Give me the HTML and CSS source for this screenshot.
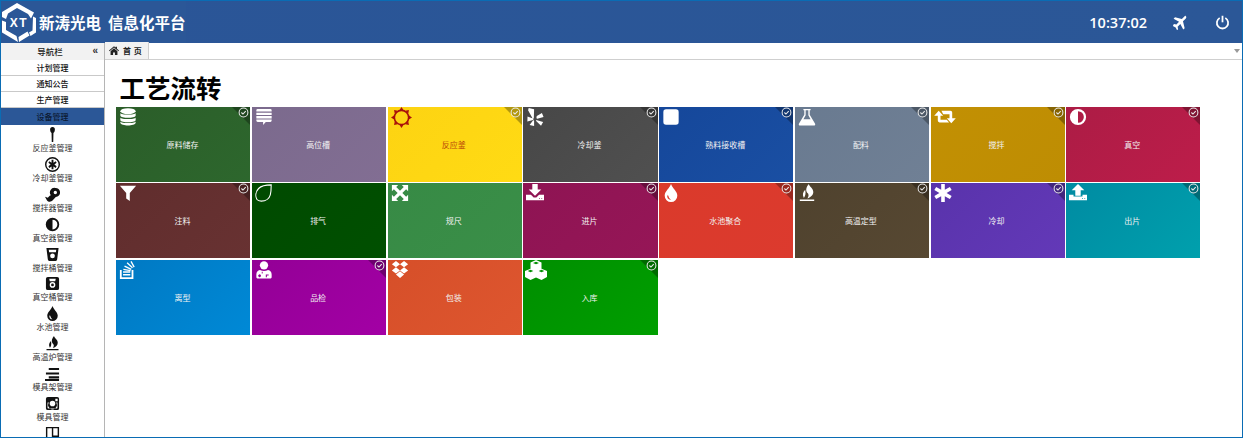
FILE: index.html
```html
<!DOCTYPE html>
<html lang="zh">
<head>
<meta charset="utf-8">
<title>新涛光电 信息化平台</title>
<link rel="stylesheet" href="styles.css">
</head>
<body>
<svg class="sprite" width="0" height="0" aria-hidden="true">
<defs>
<symbol id="i-db" viewBox="0 0 20 20"><ellipse cx="10" cy="3.500" rx="8.500" ry="3.200"/><path d="M1.500 5.500c1 2.400 16 2.400 17 0v3c-1 3-16 3-17 0zM1.500 10.500c1 2.400 16 2.400 17 0v3c-1 3-16 3-17 0zM1.500 15c1 2.400 16 2.400 17 0v1.500c-1 4-16 4-17 0z"/></symbol>
<symbol id="i-chat" viewBox="0 0 20 20"><path d="M3 1h14a1.500 1.500 0 0 1 1.500 1.500V4H1.500V2.500A1.500 1.500 0 0 1 3 1zM1.500 5.200h17v2.600h-17zM1.500 9h17v2.600h-17zM1.500 12.800h17v1.200A1.500 1.500 0 0 1 17 15.500h-5l-3 3.500v-3.500H3A1.500 1.500 0 0 1 1.500 14z"/></symbol>
<symbol id="i-sun" viewBox="0 0 20 20"><circle cx="10" cy="10" r="6.800" fill="none" stroke="currentColor" stroke-width="1.500"/><path d="M10 0l2 3H8zM10 20l2-3H8zM0 10l3 2V8zM20 10l-3 2V8zM2.900 2.900l3.500.7-2.800 2.800zM17.100 2.900l-3.500.7 2.800 2.800zM2.900 17.100l3.500-.7-2.800-2.800zM17.100 17.100l-3.500-.7 2.800-2.800z"/></symbol>
<symbol id="i-yelp" viewBox="0 0 20 20"><path d="M3 0l6 1.500-.3 9.500c-.1.800-1 1-1.500.4L2.300 2.500zM12 9l5.700-3.500 1.800 4.500-7 2c-.8.200-1.200-1.300-.5-3zM1.700 9.500l6 2.300c.8.400.7 1.300 0 1.600L1.500 15zM12.300 13.500l6.700 2-2.300 4.200-5.200-5c-.5-.6 0-1.400.8-1.200zM9 14.500v5.500l-5-1 3.700-5c.5-.6 1.300-.2 1.300.5z"/></symbol>
<symbol id="i-square" viewBox="0 0 20 20"><rect x="1.500" y="1.500" width="17" height="17" rx="3"/></symbol>
<symbol id="i-flask" viewBox="0 0 20 20"><path fill-rule="evenodd" d="M6 1h8v1.500h-1v5l6 10c.5 1-.2 2-1.200 2H2.200c-1 0-1.700-1-1.200-2l6-10v-5H6zM8.500 2.500v5.500L6 12.500h8L11.500 8V2.500z"/></symbol>
<symbol id="i-retweet" viewBox="0 0 24 20"><path d="M5 3L10 8.500H7V13h7l2.500 3H6a2 2 0 0 1-2-2V8.500H0zM8 3h10a2 2 0 0 1 2 2v6.500h4L19 17l-5-5.500h3V7h-7z"/></symbol>
<symbol id="i-half" viewBox="0 0 20 20"><path fill-rule="evenodd" d="M10 1a9 9 0 1 1 0 18 9 9 0 0 1 0-18zM10 3.500v13a6.500 6.500 0 0 0 0-13z"/></symbol>
<symbol id="i-filter" viewBox="0 0 20 20"><path d="M1 2h18l-7 8v9l-4-3v-6z"/></symbol>
<symbol id="i-leaf" viewBox="0 0 20 20"><path fill="none" stroke="currentColor" stroke-width="1.200" d="M18 1c-7 0-11 1-14 4S0 13 2 17c1 1.500 3 2 5 2 5 0 9-3 10-7s1-8 1-11z"/></symbol>
<symbol id="i-expand" viewBox="0 0 20 20"><path d="M1 1h7L5.800 3.200 10 7.400l4.200-4.200L12 1h7v7l-2.200-2.200L12.600 10l4.200 4.200L19 12v7h-7l2.200-2.200L10 12.600l-4.200 4.200L8 19H1v-7l2.200 2.200L7.400 10 3.200 5.800 1 8z"/></symbol>
<symbol id="i-down" viewBox="0 0 20 20"><path fill-rule="evenodd" d="M7 0h6v6h4l-7 7-7-7h4zM0 12h5.500l3 3h3l3-3H20v6H0zM14.500 15.500v1h1v-1zM17 15.500v1h1v-1z"/></symbol>
<symbol id="i-up" viewBox="0 0 20 20"><path fill-rule="evenodd" d="M10 0l7 7h-4v6H7V7H3zM0 12h5v2h10v-2h5v6H0zM14.500 15.500v1h1v-1zM17 15.500v1h1v-1z"/></symbol>
<symbol id="i-drop" viewBox="0 0 20 20"><path fill-rule="evenodd" d="M10 0c1.500 5 7 8 7 13a7 7 0 0 1-14 0c0-5 5.500-8 7-13zM6.500 12a3.500 3.500 0 0 0 3.500 5.500c-2-1-2.500-3-3.500-5.500z"/></symbol>
<symbol id="i-fire" viewBox="0 0 20 20"><path d="M12 0c.5 3 5 4.500 5 9 0 3-2.500 6-6.500 7 1.500-2.500 2-4.500-.5-6.500C8 6 10 2.500 12 0zM8 6.500C5.500 9 4.500 12 6.500 15.500 8 14 9 11 8 6.500zM2 17.300h16V19H2z"/></symbol>
<symbol id="i-asterisk" viewBox="0 0 20 20"><path d="M8 0h4v6.500l5.600-3.300 2 3.500L14 10l5.600 3.300-2 3.500L12 13.500V20H8v-6.500l-5.600 3.300-2-3.500L6 10 .4 6.700l2-3.500L8 6.500z"/></symbol>
<symbol id="i-stack" viewBox="0 0 20 20"><path d="M1 10h2v8h11v-8h2v10H1zM4.500 11.500h8V13h-8zM4.500 14.500h8V16h-8zM5 8.500l8 1.500-.3 1.500-8-1.500zM6.500 5l7.500 3.500-.7 1.400L5.800 6.400zM9.500 1.500L15.500 7l-1 1.100-6-5.500zM14 0l3.500 6.500-1.300.7L12.700.7z"/></symbol>
<symbol id="i-doctor" viewBox="0 0 20 20"><circle cx="10" cy="4.800" r="4.600"/><path fill-rule="evenodd" d="M5.500 10c3 1.500 6 1.500 9 0 2.500.5 4 2 4 5v3c0 1-1 1.500-2 1.500H3.500c-1 0-2-.5-2-1.500v-3c0-3 1.500-4.500 4-5zM4.500 15a1.500 1.500 0 1 0 2 2 1.500 1.500 0 0 0-2-2zM7.500 12v2h1v-2zM12 16v2h1.200v-2h2v-1h-3.200z"/></symbol>
<symbol id="i-dropbox" viewBox="0 0 20 20"><path d="M5.500 0L10 3.500 5.500 7 1 3.500zM14.500 0L19 3.500 14.500 7 10 3.500zM5.500 7L10 10.500 5.500 14 1 10.500zM14.500 7L19 10.500 14.500 14 10 10.500zM10 11.500l4.500 3.500-4.500 4-4.500-4z"/></symbol>
<symbol id="i-cubes" viewBox="0 0 22 20"><path fill-rule="evenodd" d="M11 0l5.500 2.500v6.200L22 11v6l-5.500 3L11 17.500 5.500 20 0 17v-6l5.500-2.300V2.500zM8 3l3 1.300L14 3l-3-1.300zM2.700 11l2.800 1.200L8.300 11 5.500 9.800zM13.700 11l2.800 1.200 2.800-1.200-2.800-1.200z"/></symbol>
<symbol id="i-check" viewBox="0 0 12 12"><circle cx="6" cy="6" r="4.800" fill="none" stroke="currentColor" stroke-width="1.100"/><path fill="none" stroke="currentColor" stroke-width="1.200" d="M3.700 6l1.700 1.700 3-3.300"/></symbol>
<symbol id="i-pin" viewBox="0 0 16 16"><path d="M8 0a2.500 2.500 0 0 1 2.500 3c0 2-1 3-1.500 3.500L8.800 16H7.200L7 6.500C6.500 6 5.500 5 5.500 3A2.500 2.500 0 0 1 8 0z"/></symbol>
<symbol id="i-empire" viewBox="0 0 16 16"><path fill-rule="evenodd" d="M8 0a8 8 0 1 1 0 16A8 8 0 0 1 8 0zM8 1.500a6.500 6.500 0 1 0 0 13 6.500 6.500 0 0 0 0-13zM7 3h2v3l2.400-1.600 1 1.700L10 8l2.400 1.900-1 1.700L9 10v3H7v-3l-2.400 1.600-1-1.700L6 8 3.600 6.100l1-1.700L7 6z"/></symbol>
<symbol id="i-steam" viewBox="0 0 16 16"><path fill-rule="evenodd" d="M11 1a4.800 4.800 0 1 1 .5 9.600L8 14.500c-1.500 1.500-4.500 1.800-6-.5L0 10.500l3 1C4 10 5 9 6.300 8.700A4.800 4.800 0 0 1 11 1zM11 4a1.800 1.800 0 1 0 0 3.600A1.800 1.800 0 0 0 11 4z"/></symbol>
<symbol id="i-bucket" viewBox="0 0 16 16"><path fill-rule="evenodd" d="M1.500 1h13l-1.500 12c-.2 1.500-1.500 2-2.500 2h-5c-1 0-2.300-.5-2.500-2zM4 3l.4 2.500h7.200L12 3zM8 7a2.500 2.500 0 1 0 0 5 2.500 2.500 0 0 0 0-5z"/></symbol>
<symbol id="i-vac" viewBox="0 0 16 16"><path fill-rule="evenodd" d="M3 1h10a2 2 0 0 1 2 2v10a2 2 0 0 1-2 2H3a2 2 0 0 1-2-2V3a2 2 0 0 1 2-2zM4.500 3l.6 2.500h5.800l.6-2.500zM8 6.500A3 3 0 1 0 8 12.500 3 3 0 0 0 8 6.500zM8 8a1.500 1.500 0 1 1 0 3 1.500 1.500 0 0 1 0-3z"/></symbol>
<symbol id="i-bars" viewBox="0 0 16 16"><path d="M4 2h11v2.200H4zM1 6.800h14V9H1zM4 11h11v2.200H4zM0 13.800h15V16H0z"/></symbol>
<symbol id="i-insta" viewBox="0 0 16 16"><path fill-rule="evenodd" d="M3 1h10a2 2 0 0 1 2 2v10a2 2 0 0 1-2 2H3a2 2 0 0 1-2-2V3a2 2 0 0 1 2-2zM11 3v2.500h2.500V3zM8 5a3 3 0 1 0 0 6 3 3 0 0 0 0-6zM2.700 7v5.500c0 .5.300.8.800.8h9c.5 0 .8-.3.800-.8V7h-1.500a4.600 4.600 0 1 1-7.600 0z"/></symbol>
<symbol id="i-trello" viewBox="0 0 16 16"><path fill-rule="evenodd" d="M1 1h14v15H1zM2.500 2.500V14h4.800V2.500zM8.800 2.500V10h4.700V2.500z"/></symbol>
<symbol id="i-plane" viewBox="0 0 16 16"><path d="M14.800 1.200c.8.800.5 2-.3 2.800l-2.800 2.700 1.800 7.300-1.500 1.500-3.100-5.800-2.900 2.800.5 2.700-1.100 1.100-1.500-3-3-1.500L2 9.500l2.700.5 2.800-2.900L1.700 4 3.200 2.500 10.500 4.300l2.700-2.800c.6-.7 1-.8 1.600-.3z"/></symbol>
<symbol id="i-home" viewBox="0 0 16 14"><path d="M8 0l2.500 2.200V1h2.200v3.200L16 7l-.8 1L8 2 .8 8 0 7zM8 3.500l5.500 4.500v6H9.500v-4h-3v4h-4V8z"/></symbol>
</defs>
</svg>
<div class="window">
  <header class="topbar">
    <div class="brand">
      <svg class="logo" viewBox="0 0 36 42">
        <path class="logo-hex" d="M16 2L33 11.500l-3 6-3-4.500L16 7 7 12.500 5 18 1 16V11zM32 15.500L35 17v14.500l-5.500 3.500-1.500-3.500 3.500-2zM1 19.500l4 1.500v8L15.500 35l1.500 6L1 31.500zM17.500 36l9-5.500 2 4L18 41z"/>
        <text class="logo-text" x="18" y="25.500">XT</text>
      </svg>
      <span class="brand-co">新涛光电</span>
      <span class="brand-sys">信息化平台</span>
    </div>
    <div class="top-right">
      <span class="clock">10:37:02</span>
      <svg class="top-icon plane"><use href="#i-plane"/></svg>
      <svg class="top-icon power" viewBox="0 0 16 16"><path d="M5 3.200a6 6 0 1 0 6 0" fill="none" stroke="currentColor" stroke-width="1.900"/><path d="M8 .8v7" fill="none" stroke="currentColor" stroke-width="1.900"/></svg>
    </div>
  </header>
  <div class="body">
    <aside class="side">
      <div class="side-title"><span>导航栏</span><b class="collapse">«</b></div>
      <div class="menu">计划管理</div>
      <div class="menu">通知公告</div>
      <div class="menu">生产管理</div>
      <div class="menu active">设备管理</div>
      <div class="sub"><svg><use href="#i-pin"/></svg><span>反应釜管理</span></div>
      <div class="sub"><svg><use href="#i-empire"/></svg><span>冷却釜管理</span></div>
      <div class="sub"><svg><use href="#i-steam"/></svg><span>搅拌器管理</span></div>
      <div class="sub"><svg><use href="#i-half"/></svg><span>真空器管理</span></div>
      <div class="sub"><svg><use href="#i-bucket"/></svg><span>搅拌桶管理</span></div>
      <div class="sub"><svg><use href="#i-vac"/></svg><span>真空桶管理</span></div>
      <div class="sub"><svg><use href="#i-drop"/></svg><span>水池管理</span></div>
      <div class="sub"><svg><use href="#i-fire"/></svg><span>高温炉管理</span></div>
      <div class="sub"><svg><use href="#i-bars"/></svg><span>模具架管理</span></div>
      <div class="sub"><svg><use href="#i-insta"/></svg><span>模具管理</span></div>
      <div class="sub"><svg><use href="#i-trello"/></svg></div>
    </aside>
    <main class="main">
      <div class="tabs">
        <div class="tab"><svg class="tab-home"><use href="#i-home"/></svg><span>首 页</span></div>
        <i class="tab-arrow"></i>
      </div>
      <div class="content">
        <h1 class="title">工艺流转</h1>
        <div class="tiles">
          <a class="tile c-green done"><svg class="ic"><use href="#i-db"/></svg><svg class="ck"><use href="#i-check"/></svg><span>原料储存</span></a>
          <a class="tile c-mauve"><svg class="ic"><use href="#i-chat"/></svg><span>高位槽</span></a>
          <a class="tile c-yellow done"><svg class="ic big"><use href="#i-sun"/></svg><svg class="ck"><use href="#i-check"/></svg><span>反应釜</span></a>
          <a class="tile c-gray done"><svg class="ic"><use href="#i-yelp"/></svg><svg class="ck"><use href="#i-check"/></svg><span>冷却釜</span></a>
          <a class="tile c-navy done"><svg class="ic"><use href="#i-square"/></svg><svg class="ck"><use href="#i-check"/></svg><span>熟料接收槽</span></a>
          <a class="tile c-slate done"><svg class="ic"><use href="#i-flask"/></svg><svg class="ck"><use href="#i-check"/></svg><span>配料</span></a>
          <a class="tile c-gold done"><svg class="ic wide"><use href="#i-retweet"/></svg><svg class="ck"><use href="#i-check"/></svg><span>搅拌</span></a>
          <a class="tile c-crimson done"><svg class="ic"><use href="#i-half"/></svg><svg class="ck"><use href="#i-check"/></svg><span>真空</span></a>
          <a class="tile c-brown done"><svg class="ic"><use href="#i-filter"/></svg><svg class="ck"><use href="#i-check"/></svg><span>注料</span></a>
          <a class="tile c-forest"><svg class="ic"><use href="#i-leaf"/></svg><span>排气</span></a>
          <a class="tile c-emerald"><svg class="ic"><use href="#i-expand"/></svg><span>规尺</span></a>
          <a class="tile c-magenta done"><svg class="ic"><use href="#i-down"/></svg><svg class="ck"><use href="#i-check"/></svg><span>进片</span></a>
          <a class="tile c-red done"><svg class="ic"><use href="#i-drop"/></svg><svg class="ck"><use href="#i-check"/></svg><span>水池聚合</span></a>
          <a class="tile c-umber done"><svg class="ic"><use href="#i-fire"/></svg><svg class="ck"><use href="#i-check"/></svg><span>高温定型</span></a>
          <a class="tile c-purple done"><svg class="ic"><use href="#i-asterisk"/></svg><svg class="ck"><use href="#i-check"/></svg><span>冷却</span></a>
          <a class="tile c-teal done"><svg class="ic"><use href="#i-up"/></svg><svg class="ck"><use href="#i-check"/></svg><span>出片</span></a>
          <a class="tile c-blue"><svg class="ic"><use href="#i-stack"/></svg><span>离型</span></a>
          <a class="tile c-violet done"><svg class="ic"><use href="#i-doctor"/></svg><svg class="ck"><use href="#i-check"/></svg><span>品检</span></a>
          <a class="tile c-orange"><svg class="ic"><use href="#i-dropbox"/></svg><span>包装</span></a>
          <a class="tile c-lime done"><svg class="ic cubes"><use href="#i-cubes"/></svg><svg class="ck"><use href="#i-check"/></svg><span>入库</span></a>
        </div>
      </div>
    </main>
  </div>
</div>
</body>
</html>
```
FILE: styles.css
```css
* { box-sizing: border-box; }
html, body { margin: 0; height: 100%; overflow: hidden; }
body { font-family: "Noto Sans CJK SC", "Noto Sans", sans-serif; font-size: 8px; color: #222; background: #fff; }
.sprite { position: absolute; }
.window { height: 438px; display: flex; flex-direction: column; border: 1px solid #0a6cb4; }
.topbar { height: 42px; flex: none; display: flex; justify-content: space-between; align-items: center; background: linear-gradient(90deg, #2a5597 0, #2b5797 100%); color: #fff; }
.brand { display: flex; align-items: center; height: 100%; background: #2b5797; }
.logo { width: 36px; height: 42px; flex: none; fill: #fff; }
.logo-text { font-family: "Liberation Sans", sans-serif; font-size: 12px; font-weight: 700; letter-spacing: 1.500px; text-anchor: middle; fill: #fff; }
.brand-co { margin-left: 2px; font-size: 15.500px; font-weight: 700; }
.brand-sys { margin-left: 7px; font-size: 15.500px; font-weight: 700; }
.top-right { display: flex; align-items: center; height: 100%; }
.clock { font-family: "Open Sans", sans-serif; font-size: 14.500px; font-weight: 600; margin-right: 25px; }
.top-icon { width: 15px; height: 15px; fill: #fff; color: #fff; }
.plane { margin-right: 28px; }
.power { margin-right: 12px; }
.body { flex: 1; min-height: 0; display: flex; }
.side { width: 104px; flex: none; overflow: hidden; border-right: 1px solid #b5b5b5; background: #fff; }
.side-title { height: 17px; display: flex; justify-content: center; align-items: center; position: relative; background: #f2f2f2; font-weight: 500; padding-right: 5px; padding-bottom: 2px; font-size: 8.500px; }
.collapse { position: absolute; right: 6px; top: 1px; font: 700 10px/14px "Liberation Sans", sans-serif; color: #333; }
.menu { height: 16px; line-height: 16px; text-align: center; font-weight: 500; border-bottom: 1px solid #c9c9c9; color: #111; }
.menu.active { background: #2b5797; border-bottom-color: #2b5797; color: #0c1a33; height: 17px; line-height: 17px; }
.sub { height: 29.900px; display: flex; flex-direction: column; align-items: center; justify-content: flex-start; padding-top: 2px; color: #333; }
.sub svg { width: 15px; height: 15px; fill: #111; color: #111; flex: none; }
.sub span { line-height: 12px; }
.main { flex: 1; min-width: 0; display: flex; flex-direction: column; }
.tabs { height: 17px; flex: none; display: flex; align-items: flex-end; position: relative; border-bottom: 1px solid #cfcfcf; background: #fff; }
.tab { width: 44px; height: 17px; display: flex; align-items: center; padding-left: 4px; gap: 4px; background: #f2f2f2; border-right: 1px solid #cfcfcf; font-weight: 700; letter-spacing: .5px; }
.tab-home { width: 10px; height: 9px; fill: #222; }
.tab-arrow { position: absolute; right: 2px; top: 6px; border: 3px solid transparent; border-top: 4px solid #999; border-bottom: 0; }
.content { flex: 1; padding: 10px 0 0 11.400px; }
.title { margin: 0 0 3px 3px; height: 34px; font-size: 25.500px; line-height: 34px; font-weight: 700; color: #000; }
.tiles { display: grid; grid-template-columns: repeat(8, 134.100px); grid-auto-rows: 75px; gap: 1.400px 1.600px; }
.tile { position: relative; display: flex; align-items: center; justify-content: center; color: #f2f2f2; overflow: hidden; padding-right: 2px; }
.ic { position: absolute; left: 3px; top: 1px; width: 18px; height: 18px; fill: #fff; color: #fff; }
.ic.wide { width: 22px; }
.ic.cubes { width: 22px; height: 20px; left: 2px; top: 0; }
.ic.big { width: 21px; height: 21px; top: 0; }
.tile.done::before { content: ""; position: absolute; right: 0; top: 0; border-style: solid; border-width: 0 18px 18px 0; border-color: transparent rgba(0, 0, 0, .3) transparent transparent; }
.ck { position: absolute; right: 1px; top: 0; width: 11px; height: 11px; color: #ececec; }
.c-green { background: linear-gradient(135deg, #2b5d29, #2d672d); }
.c-mauve { background: linear-gradient(135deg, #7b6a8d, #826e93); }
.c-yellow { background: linear-gradient(135deg, #fdd312, #ffdb14); color: #b9470a; }
.c-yellow .ic { fill: #a8110c; color: #a8110c; }
.c-gray { background: linear-gradient(135deg, #474747, #505050); }
.c-navy { background: linear-gradient(135deg, #15479a, #1a4fa3); }
.c-slate { background: linear-gradient(135deg, #697a90, #708095); }
.c-gold { background: linear-gradient(135deg, #c29003, #be8d03); }
.c-crimson { background: linear-gradient(135deg, #ac1c45, #bd1d4a); }
.c-brown { background: linear-gradient(135deg, #602d2d, #683232); }
.c-forest { background: linear-gradient(135deg, #004a00, #005000); }
.c-emerald { background: linear-gradient(135deg, #378a45, #3a8f48); }
.c-magenta { background: linear-gradient(135deg, #8e1453, #961657); }
.c-red { background: linear-gradient(135deg, #da3a2b, #dc3a2e); }
.c-umber { background: linear-gradient(135deg, #4f422e, #574832); }
.c-purple { background: linear-gradient(135deg, #5933ab, #6339b8); }
.c-teal { background: linear-gradient(135deg, #008ba2, #00a0ad); }
.c-blue { background: linear-gradient(135deg, #0079c3, #0089d6); }
.c-violet { background: linear-gradient(135deg, #930096, #a300a5); }
.c-orange { background: linear-gradient(135deg, #d64f29, #de562f); }
.c-lime { background: linear-gradient(135deg, #008e00, #009f00); }
```
